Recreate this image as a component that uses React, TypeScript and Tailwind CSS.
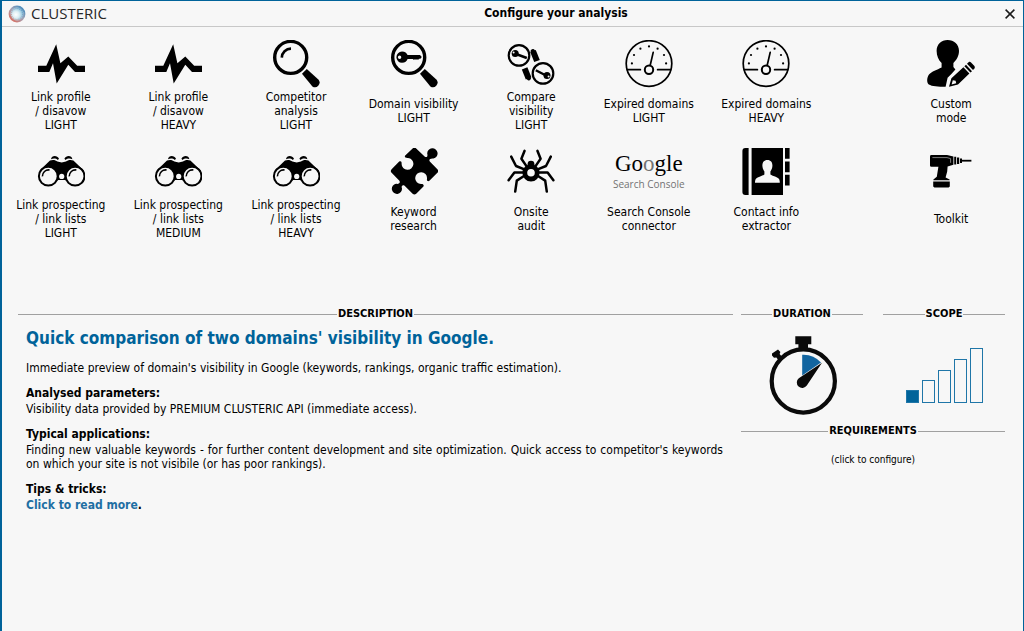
import type { ReactNode } from "react";
import clsx from "clsx";

function Icon({ children }: { children: ReactNode }) {
  return (
    <svg viewBox="0 0 48 48" fill="currentColor" aria-hidden="true" className="h-12 w-12">
      {children}
    </svg>
  );
}

function PulseIcon() {
  return (
    <Icon>
      <path d="M1 25.8H9.3L19.2 4.3 23.4 23.3 31.3 16.6 40.2 25.8H48V32H38L31.3 24.8 19.7 43.4 16 23.2 12.3 32H1Z" />
    </Icon>
  );
}

function Lens() {
  return (
    <>
      <circle cx="18.7" cy="17.4" r="16" fill="none" stroke="currentColor" strokeWidth="3.4" />
      <path d="M30 33.8 34.8 29 46.6 39.8A4.6 4.6 0 0 1 40.4 46.4Z" />
    </>
  );
}

function MagnifierIcon() {
  return (
    <Icon>
      <Lens />
      <path d="M9.8 17.6A9.2 9.2 0 0 1 19 8.6" fill="none" stroke="currentColor" strokeWidth="2.6" />
    </Icon>
  );
}

function KeySearchIcon() {
  return (
    <Icon>
      <Lens />
      <path
        fillRule="evenodd"
        d="M12 11.6C15 11.6 16.8 13.3 17.6 15H30L31.8 17 30.4 18.8H29L28 20 27 18.9 26 20 25 18.9 24 20 22.8 19H17.6C16.8 21 15 22.8 12 22.8A5.6 5.6 0 0 1 12 11.6ZM9.6 15.6A1.7 1.7 0 1 0 9.6 19 1.7 1.7 0 0 0 9.6 15.6Z"
      />
    </Icon>
  );
}

function CompareIcon() {
  return (
    <Icon>
      <g fill="none" stroke="currentColor">
        <circle cx="12" cy="15.4" r="10.3" strokeWidth="2.2" />
        <circle cx="36" cy="33.4" r="10.3" strokeWidth="2.2" />
        <g strokeWidth="6" strokeLinejoin="round">
          <path d="M26 11 30 21" />
          <path d="M17.6 28.4 21.6 38.4" />
        </g>
        <g strokeWidth="4.4" strokeLinecap="round">
          <path d="M25.8 11.2 26.4 12.5" />
          <path d="M21.2 36.8 21.8 38.2" />
        </g>
        <g strokeWidth="2.4">
          <path d="M9 14 19.8 18" />
          <path d="M39 35.5 28.8 30.2" />
        </g>
      </g>
      <circle cx="8.2" cy="13.6" r="3.5" />
      <circle cx="40" cy="35.4" r="3.5" />
      <circle cx="6.6" cy="12.6" r="1" fill="#f7f7f7" />
      <circle cx="41.6" cy="36.4" r="1" fill="#f7f7f7" />
    </Icon>
  );
}

function GaugeIcon() {
  return (
    <Icon>
      <g fill="none" stroke="currentColor" strokeWidth="1.7" strokeLinecap="round">
        <circle cx="24" cy="23.5" r="22.8" />
        <path d="M2.2 29.7H15.4M32.6 29.7H45.8" />
        <path d="M25.2 25.2 28.2 12.4" />
        <circle cx="24" cy="29.8" r="4.2" strokeWidth="2" />
      </g>
      <circle cx="6.9" cy="23.4" r="1.1" />
      <circle cx="9" cy="15" r="1.1" />
      <circle cx="15.4" cy="8.7" r="1.1" />
      <circle cx="24" cy="6.4" r="1.1" />
      <circle cx="32.6" cy="8.7" r="1.1" />
      <circle cx="39" cy="15" r="1.1" />
      <circle cx="41.1" cy="23.4" r="1.1" />
    </Icon>
  );
}

function UserEditIcon() {
  return (
    <Icon>
      <path d="M20.6 0C27 0 32 4.4 32 10.8 32 16 29.6 20 26.4 23V27L28.4 29.6 24.4 34 20.6 37.8 18.6 46.8C11 46.8 5 46.2 1.8 44.4-.6 42.6-.2 37.4 2 34.6 4.6 31 10 29.8 14.6 27.4V23C11.6 20.4 9.6 16 9.6 10.8 9.6 4.4 14.2 0 20.6 0Z" />
      <path
        fillRule="evenodd"
        d="M36.4 27.2 42.4 33.6 31 44.6 22 46.8 24.4 38.2ZM25.8 40.2 24.6 44.4 29.2 43.2 28.6 40.8Z"
      />
      <path d="M37.4 26.2 39 24.8 45 31.2 43.4 32.6Z" />
      <path d="M40 23.8 41.6 22.2C42.4 21.6 43.2 21.6 44 22.4L47.2 25.8C48 26.8 48 27.6 47.4 28.4L46 30Z" />
    </Icon>
  );
}

function BinocularsIcon() {
  return (
    <Icon>
      <path d="M14 11.2C14.6 7.2 20.2 7 22 10.8L20.8 12C19 10.4 16.6 10.2 14 11.2Z" />
      <path d="M35.4 11.2C34.8 7.2 29.2 7 27.4 10.8L28.6 12C30.4 10.4 32.8 10.2 35.4 11.2Z" />
      <path d="M2.6 22.4 13 12.6C15.4 11.4 18.6 11.8 20.4 13.6L24.7 14.4 29 13.6C30.8 11.8 34 11.4 36.4 12.6L46.8 22.4 38 36 28 32H21.4L11 36Z" />
      <g fill="#f7f7f7" stroke="currentColor" strokeWidth="2">
        <circle cx="11.3" cy="28.2" r="9.4" />
        <circle cx="38.1" cy="28.2" r="9.4" />
      </g>
      <circle cx="24.7" cy="28.4" r="2.6" fill="#f7f7f7" />
      <g fill="none" stroke="currentColor" strokeWidth="1.6">
        <path d="M5.4 28.4A6.2 6.2 0 0 1 12.6 22" />
        <path d="M32.2 28.4A6.2 6.2 0 0 1 39.4 22" />
      </g>
    </Icon>
  );
}

function PuzzleIcon() {
  return (
    <Icon>
      <path d="M22.6 .4Q24.4-1.2 26.2 .4L34.6 8.6C36.8 10 38 8.4 37.2 5.6A5.2 5.2 0 1 1 43.4 10.6C40.4 10.2 38.4 11.6 39.8 13.6L47.4 21.2Q49 23 47.4 24.8L39.4 32.8C37.4 34.2 36.6 32 37 30.4A5.9 5.9 0 1 0 31 36C32.8 35.6 34.6 36.8 33.2 38.8L26.2 45.8Q24.4 47.4 22.6 45.8L14.6 37.8C12.6 36.4 11 38.2 12 40.4A5.1 5.1 0 1 1 6 35.8C9 36.4 10.6 34.8 9.4 32.8L1.6 24.8Q0 23 1.6 21.2L9.2 13.6C11.2 12.4 11.8 14.2 11.6 15.8A5.9 5.9 0 1 0 18 10C16 10.2 14 9.4 15.2 7.6Z" />
    </Icon>
  );
}

function SpiderIcon() {
  return (
    <Icon>
      <g
        fill="none"
        stroke="currentColor"
        strokeWidth="2.5"
        strokeLinecap="round"
        strokeLinejoin="round"
      >
        <path d="M17.6 2.8 14.4 10.8 19.8 18.6M30.4 2.8 33.6 10.8 28.2 18.6" />
        <path d="M4.2 8.6 9 18 17.4 21.4M43.8 8.6 39 18 30.6 21.4" />
        <path d="M1.6 32.2 7.4 24.4H16.6M46.4 32.2 40.6 24.4H31.4" />
        <path d="M8.2 43.6 9.8 32.6 17 28M39.8 43.6 38.2 32.6 31 28" />
      </g>
      <circle cx="24" cy="16.2" r="3.4" />
      <circle cx="24" cy="24.8" r="6.2" fill="none" stroke="currentColor" strokeWidth="4.8" />
    </Icon>
  );
}

function ContactBookIcon() {
  return (
    <Icon>
      <path d="M3.4 0H6.6V47H3.4Q.4 47 .4 44V3Q.4 0 3.4 0Z" />
      <path d="M9.6 0H41V47H9.6Z" />
      <path d="M43 0H47.6V10.8H43ZM43 13.4H47.6V24.2H43ZM43 26.8H47.6V37.6H43Z" />
      <path
        fill="#f7f7f7"
        d="M25.4 12C29 12 30.6 14.6 30.4 18 30.2 20.8 29.2 22.4 28.4 23.4V26.6C31.4 28.4 35 29 36.6 30.6 37.6 31.6 37.8 33.2 37.8 34.8H13C13 33.2 13.2 31.6 14.2 30.6 15.8 29 19.4 28.4 22.4 26.6V23.4C21.6 22.4 20.6 20.8 20.4 18 20.2 14.6 21.8 12 25.4 12Z"
      />
    </Icon>
  );
}

function DrillIcon() {
  return (
    <Icon>
      <path d="M4.4 7H20L26.4 8.6V16.8L20.6 18.4 20.2 23.4 18.6 29.4 22.6 31.4V32.2H6.4V31.4L9.8 28.8 11.4 18.8H4.4Q3 18.8 3 17.4V8.4Q3 7 4.4 7Z" />
      <path d="M6.2 33.6H22.8V38.4L21.6 39.4H7.4L6.2 38.4Z" />
      <path d="M27.2 8.8H29.2V16.6H27.2ZM30 9.4H32.2V16H30ZM33 10.4H35V15H33Z" />
      <path d="M35 11.8H44.4V13.6H35Z" />
      <path d="M5.4 9.6H20L23.6 10.6M23.6 10.6V14.8" fill="none" stroke="#999" strokeWidth=".8" />
    </Icon>
  );
}

function SearchConsoleLogo() {
  return (
    <span className="flex h-12 flex-col items-center whitespace-nowrap">
      <span className="font-['Liberation_Serif',serif] text-[23px] leading-8">
        Go<span className="text-neutral-500">o</span>gle
      </span>
      <span className="-mt-0.5 font-['Open_Sans',sans-serif] text-[10px] leading-3 text-neutral-500">
        Search Console
      </span>
    </span>
  );
}

interface Mode {
  lines: string[];
  icon: ReactNode;
  /** Separated from the presets by an empty column. */
  apart?: boolean;
}

const MODES: Mode[] = [
  { lines: ["Link profile", "/ disavow", "LIGHT"], icon: <PulseIcon /> },
  { lines: ["Link profile", "/ disavow", "HEAVY"], icon: <PulseIcon /> },
  { lines: ["Competitor", "analysis", "LIGHT"], icon: <MagnifierIcon /> },
  { lines: ["Domain visibility", "LIGHT"], icon: <KeySearchIcon /> },
  { lines: ["Compare", "visibility", "LIGHT"], icon: <CompareIcon /> },
  { lines: ["Expired domains", "LIGHT"], icon: <GaugeIcon /> },
  { lines: ["Expired domains", "HEAVY"], icon: <GaugeIcon /> },
  { lines: ["Custom", "mode"], icon: <UserEditIcon />, apart: true },
  { lines: ["Link prospecting", "/ link lists", "LIGHT"], icon: <BinocularsIcon /> },
  { lines: ["Link prospecting", "/ link lists", "MEDIUM"], icon: <BinocularsIcon /> },
  { lines: ["Link prospecting", "/ link lists", "HEAVY"], icon: <BinocularsIcon /> },
  { lines: ["Keyword", "research"], icon: <PuzzleIcon /> },
  { lines: ["Onsite", "audit"], icon: <SpiderIcon /> },
  { lines: ["Search Console", "connector"], icon: <SearchConsoleLogo /> },
  { lines: ["Contact info", "extractor"], icon: <ContactBookIcon /> },
  { lines: ["Toolkit"], icon: <DrillIcon />, apart: true },
];

function ModeButton({ lines, icon, apart = false }: Mode) {
  return (
    <button type="button" className={clsx("flex flex-col items-center gap-0.5", apart && "col-start-9")}>
      {icon}
      <span className="flex h-[42px] flex-col justify-center text-xs leading-[14px] whitespace-nowrap">
        {lines.map((line) => (
          <span key={line}>{line}</span>
        ))}
      </span>
    </button>
  );
}

function SectionTitle({ children }: { children: ReactNode }) {
  return (
    <h2 className="flex items-center gap-px text-[11px] leading-[14px] font-bold before:h-px before:flex-1 before:bg-[#a0a0a0] after:h-px after:flex-1 after:bg-[#a0a0a0]">
      {children}
    </h2>
  );
}

function Topic({ title, children }: { title: string; children: ReactNode }) {
  return (
    <div className="flex flex-col gap-0.5">
      <h4 className="font-bold">{title}</h4>
      <p className="text-justify">{children}</p>
    </div>
  );
}

function Stopwatch() {
  return (
    <svg viewBox="-2 0 72 80" role="img" aria-label="Short duration" className="h-20 w-[72px]">
      <circle cx="35.3" cy="45" r="31.6" fill="none" stroke="#0a0a0a" strokeWidth="4.2" />
      <path d="M27.3 .2H43.3V8.2H40V13H30.4V8.2H27.3Z" fill="#0a0a0a" />
      <path d="M4 17.4 10 13.4 12.4 16 11.6 18 14.4 21.2 10.6 24.4 8.4 21.6 6 21.8 4 19.6Z" fill="#0a0a0a" />
      <path d="M34.2 18.8Q45.4 18.2 53 26.6L34.2 39.6Z" fill="#1265a0" />
      <path d="M54 26.8 38.8 49.6A5.5 5.5 0 1 1 30.8 42.2Z" fill="#0a0a0a" />
    </svg>
  );
}

const BARS = [13, 23, 33, 44, 55];

function ScopeChart() {
  return (
    <svg viewBox="-2 0 80 56" role="img" aria-label="Scope 1 of 5" className="h-14 w-20">
      {BARS.map((h, i) => (
        <rect
          key={h}
          x={i * 16 + 0.5}
          y={55.5 - h}
          width="12"
          height={h - 1}
          fill={i === 0 ? "#00639a" : "none"}
          stroke="#1f76a8"
        />
      ))}
    </svg>
  );
}

function BrandMark() {
  return (
    <svg viewBox="0 0 18 18" aria-hidden="true" className="h-[18px] w-[18px]">
      <defs>
        <linearGradient id="ring" x1=".9" y1=".1" x2=".2" y2=".9">
          <stop offset="0" stopColor="#4a8dbd" />
          <stop offset=".5" stopColor="#a3a5b8" />
          <stop offset="1" stopColor="#d2766c" />
        </linearGradient>
        <radialGradient id="core" cx=".42" cy=".55">
          <stop offset="0" stopColor="#fff" />
          <stop offset=".5" stopColor="#dceef4" />
          <stop offset="1" stopColor="#8fc3dc" />
        </radialGradient>
      </defs>
      <circle cx="9" cy="9" r="6.8" fill="url(#core)" />
      <circle cx="9" cy="9" r="7.4" fill="none" stroke="url(#ring)" strokeWidth="2" />
      <circle cx="9" cy="9" r="5.6" fill="none" stroke="url(#ring)" strokeWidth="1.2" strokeDasharray="1.2 .8" opacity=".6" />
    </svg>
  );
}

export default function App() {
  return (
    <div className="flex min-h-screen flex-col border-t border-r border-l-2 border-[#00639a] bg-[#f7f7f7] font-['DejaVu_Sans_Condensed','DejaVu_Sans',sans-serif] text-xs leading-[14px] font-normal text-black">
      <header className="flex items-center border-b border-[#c8c8c8] pr-2 pl-1.5 leading-[25px]">
        <div className="flex items-center gap-[5px]">
          <BrandMark />
          <span className="font-['Open_Sans',sans-serif] text-[15px] leading-[25px] text-neutral-800">
            CLUSTERIC
          </span>
        </div>
        <h1 className="flex-1 text-center font-bold">Configure your analysis</h1>
        <button type="button" aria-label="Close">
          <svg viewBox="0 0 10 10" className="h-2.5 w-2.5" stroke="#1a1a1a" strokeWidth="1.5">
            <path d="M.6 .6 9.4 9.4M9.4 .6 .6 9.4" />
          </svg>
        </button>
      </header>

      <nav
        aria-label="Analysis modes"
        className="grid grid-cols-[repeat(7,7fr)_4fr_7fr] gap-y-4 pt-[13px] pr-[13px]"
      >
        {MODES.map((mode) => (
          <ModeButton key={mode.lines.join(" ")} {...mode} />
        ))}
      </nav>

      <main className="mt-[67px] flex gap-2 pr-[18px] pl-4">
        <section className="flex-1">
          <SectionTitle>DESCRIPTION</SectionTitle>
          <div className="flex flex-col gap-[11px] pt-[5px] pr-2.5 pl-2">
            <h3 className="text-[17px] leading-6 font-bold text-[#00639a]">
              Quick comparison of two domains' visibility in Google.
            </h3>
            <p>
              Immediate preview of domain's visibility in Google (keywords, rankings, organic traffic
              estimation).
            </p>
            <Topic title="Analysed parameters:">
              Visibility data provided by PREMIUM CLUSTERIC API (immediate access).
            </Topic>
            <Topic title="Typical applications:">
              Finding new valuable keywords - for further content development and site optimization.
              Quick access to competitor's keywords on which your site is not visibile (or has poor
              rankings).
            </Topic>
            <Topic title="Tips & tricks:">
              <a href="#more" className="font-bold text-[#1f6fa3]">
                Click to read more
              </a>
              <b>.</b>
            </Topic>
          </div>
        </section>

        <aside className="flex w-66 flex-col">
          <div className="grid grid-cols-2 gap-5">
            <section className="flex flex-col">
              <SectionTitle>DURATION</SectionTitle>
              <div className="flex justify-center pt-[15px]">
                <Stopwatch />
              </div>
            </section>
            <section className="flex flex-col">
              <SectionTitle>SCOPE</SectionTitle>
              <div className="flex justify-center pt-[27px]">
                <ScopeChart />
              </div>
            </section>
          </div>
          <section className="mt-2 flex flex-col">
            <SectionTitle>REQUIREMENTS</SectionTitle>
            <button type="button" className="mt-[15px] self-center text-[10px] leading-[14px]">
              (click to configure)
            </button>
          </section>
        </aside>
      </main>
    </div>
  );
}
